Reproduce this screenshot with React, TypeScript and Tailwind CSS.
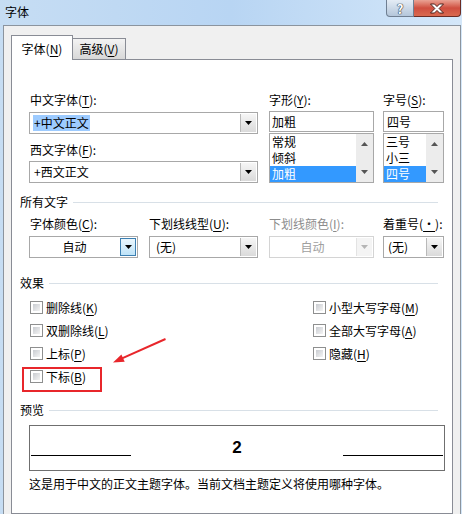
import React from 'react';

// Word 2010 "字体" dialog on a Windows 7 frame

const Key = ({ text, k, colon = true }: { text: string; k: string; colon?: boolean }) => (
  <span>
    {text}(<span className="underline decoration-1 underline-offset-[2px]">{k}</span>){colon ? ':' : ''}
  </span>
);

const Caret = ({ color = '#000' }: { color?: string }) => (
  <svg width="7" height="4" viewBox="0 0 7 4">
    <path d="M0 0h7L3.5 4z" fill={color} />
  </svg>
);

const CaretUp = ({ color = '#555' }: { color?: string }) => (
  <svg width="7" height="4" viewBox="0 0 7 4">
    <path d="M0 4h7L3.5 0z" fill={color} />
  </svg>
);

type ComboProps = {
  value: string;
  className?: string;
  pad?: string;
  selected?: boolean;
  center?: boolean;
  disabled?: boolean;
  hot?: boolean;
};

function Combo({ value, className = '', pad = 'pl-[3px]', selected, center, disabled, hot }: ComboProps) {
  let btn = 'border-l border-[#b9b9b9] bg-linear-to-b from-[#f6f6f6] to-[#dadada]';
  if (hot) btn = 'border border-[#3c7fb1] bg-linear-to-b from-[#eaf6fd] to-[#bee3f8]';
  if (disabled) btn = 'border-l border-[#e3e3e3] bg-[#f4f4f4]';
  return (
    <div
      className={`flex h-[22px] border bg-white ${disabled ? 'border-[#d4d4d4] text-[#a0a0a0]' : 'border-[#a8a8a8]'} ${className}`}
    >
      <div className={`flex-1 flex items-center ${center ? 'justify-center' : pad}`}>
        <span className={`leading-[16px] ${selected ? 'bg-[#9dcbff] px-[1px]' : ''}`}>{value}</span>
      </div>
      <div className={`w-[16px] m-px flex items-center justify-center ${btn}`}>
        <Caret color={disabled ? '#b5b5b5' : '#000'} />
      </div>
    </div>
  );
}

function ListBox({ items, sel, className = '' }: { items: string[]; sel: string; className?: string }) {
  return (
    <div className={`flex h-[50px] border border-[#a8a8a8] bg-white ${className}`}>
      <div className="flex-1 flex flex-col">
        {items.map((it) => (
          <div
            key={it}
            className={`h-[16px] shrink-0 leading-[16px] pl-[2px] ${it === sel ? 'bg-[#3399ff] text-white' : ''}`}
          >
            {it}
          </div>
        ))}
      </div>
      <div className="w-[17px] bg-[#ececec] flex flex-col justify-between items-center py-[8px]">
        <CaretUp />
        <Caret color="#555" />
      </div>
    </div>
  );
}

const Check = () => (
  <span className="w-[13px] h-[13px] shrink-0 border border-[#8e8f8f] bg-white p-[2px]">
    <span className="block w-full h-full bg-linear-to-br from-[#c9ccd1] to-[#f4f4f4]" />
  </span>
);

function CheckRow({ text, k }: { text: string; k: string }) {
  return (
    <div className="flex items-center h-[23px]">
      <Check />
      <span className="ml-[3px] leading-[16px]">
        <Key text={text} k={k} colon={false} />
      </span>
    </div>
  );
}

const Section = ({ title, className = '' }: { title: string; className?: string }) => (
  <div className={`flex items-center h-[16px] pr-[6px] ${className}`}>
    <span className="leading-[16px]">{title}</span>
    <div className="flex-1 h-px bg-[#d8e0e7] ml-[5px]" />
  </div>
);

export default function App() {
  return (
    <div className="relative w-[462px] h-[514px] overflow-hidden flex flex-col bg-linear-to-r from-[#c6ddf3] via-[#b8d5f3] to-[#d4e7f9] font-['Noto_Sans_CJK_SC','Noto_Sans',sans-serif] text-[12px] text-black">
      {/* title bar */}
      <div className="h-[25px] flex items-start shrink-0">
        <span className="pl-[5px] pt-[4px] leading-[16px]">字体</span>
        <div className="ml-auto mr-[1px] flex">
          <div className="w-[28px] h-[17px] border border-[#6f7f92] border-t-0 rounded-bl-[4px] bg-linear-to-b from-[#e4ecf5] to-[#b4c6da] flex items-center justify-center">
            <span className="text-white font-bold text-[13px] leading-[15px] [text-shadow:0_0_1px_#2a3440,0_0_1px_#2a3440,0_0_1px_#2a3440]">
              ?
            </span>
          </div>
          <div className="w-[47px] h-[17px] border border-l-0 border-t-0 border-[#6b2b23] rounded-br-[4px] bg-linear-to-b from-[#e9a294] via-[#cf4e3f] to-[#d9694f] flex items-center justify-center">
            <svg width="16" height="11" viewBox="0 0 16 11">
              <path
                d="M1.5 1h4l2.5 2.6L10.5 1h4l-4.4 4.5L14.5 10h-4L8 7.4 5.5 10h-4l4.4-4.5z"
                fill="#fff"
                stroke="#3d1510"
                strokeWidth="0.9"
                strokeLinejoin="round"
              />
            </svg>
          </div>
        </div>
      </div>

      {/* client area */}
      <div className="flex-1 flex flex-col ml-[3px] mr-[1px] border-l border-t border-r border-[#8b949e] bg-[#f0f0f0] pl-[7px] pt-[9px]">
        {/* tabs */}
        <div className="flex items-end h-[24px] shrink-0">
          <div className="relative z-10 -mb-px w-[62px] h-[25px] border border-b-0 border-[#898c95] bg-white flex justify-center pt-[5px]">
            <span className="leading-[16px]">
              <Key text="字体" k="N" colon={false} />
            </span>
          </div>
          <div className="w-[53px] h-[21px] border border-l-0 border-b-0 border-[#898c95] bg-linear-to-b from-[#f3f3f3] to-[#d8d8d8] flex justify-center pt-[2px]">
            <span className="leading-[16px]">
              <Key text="高级" k="V" colon={false} />
            </span>
          </div>
        </div>

        {/* tab page */}
        <div className="flex-1 w-[442px] border border-[#898c95] bg-white px-[8px] pt-[32px]">
          <div className="flex ml-[9px]">
            <div className="w-[229px] flex flex-col">
              <div className="leading-[16px] pl-[1px]">
                <Key text="中文字体" k="T" />
              </div>
              <Combo value="+中文正文" selected className="mt-[4px]" pad="pl-[3px]" />
              <div className="leading-[16px] pl-[1px] mt-[8px]">
                <Key text="西文字体" k="F" />
              </div>
              <Combo value="+西文正文" className="mt-[3px]" pad="pl-[4px]" />
            </div>
            <div className="w-[105px] ml-[11px] flex flex-col">
              <div className="leading-[16px]">
                <Key text="字形" k="Y" />
              </div>
              <div className="mt-[3px] h-[21px] border border-[#a8a8a8] bg-white flex items-center pl-[2px] leading-[16px]">
                加粗
              </div>
              <ListBox items={['常规', '倾斜', '加粗']} sel="加粗" className="mt-[1px]" />
            </div>
            <div className="w-[61px] ml-[9px] flex flex-col">
              <div className="leading-[16px]">
                <Key text="字号" k="S" />
              </div>
              <div className="mt-[3px] h-[21px] border border-[#a8a8a8] bg-white flex items-center pl-[3px] leading-[16px]">
                四号
              </div>
              <ListBox items={['三号', '小三', '四号']} sel="四号" className="mt-[1px]" />
            </div>
          </div>

          <Section title="所有文字" className="mt-[11px]" />

          <div className="flex ml-[9px] mt-[6px]">
            <div className="w-[109px] flex flex-col">
              <div className="leading-[16px] pl-[1px]">
                <Key text="字体颜色" k="C" />
              </div>
              <Combo value="自动" center hot className="mt-[4px]" />
            </div>
            <div className="w-[109px] ml-[11px] flex flex-col">
              <div className="leading-[16px]">
                <Key text="下划线线型" k="U" />
              </div>
              <Combo value="(无)" className="mt-[4px]" pad="pl-[6px]" />
            </div>
            <div className="w-[105px] ml-[11px] flex flex-col">
              <div className="leading-[16px] text-[#8c8c8c]">
                <Key text="下划线颜色" k="I" />
              </div>
              <Combo value="自动" center disabled className="mt-[4px]" />
            </div>
            <div className="w-[61px] ml-[9px] flex flex-col">
              <div className="leading-[16px]">
                <Key text="着重号" k="·" />
              </div>
              <Combo value="(无)" className="mt-[4px]" pad="pl-[4px]" />
            </div>
          </div>

          <Section title="效果" className="mt-[17px]" />

          <div className="grid grid-cols-[283px_1fr] ml-[10px] mt-[5px]">
            <div className="flex flex-col">
              <CheckRow text="删除线" k="K" />
              <CheckRow text="双删除线" k="L" />
              <CheckRow text="上标" k="P" />
              <CheckRow text="下标" k="B" />
            </div>
            <div className="flex flex-col">
              <CheckRow text="小型大写字母" k="M" />
              <CheckRow text="全部大写字母" k="A" />
              <CheckRow text="隐藏" k="H" />
            </div>
          </div>

          <Section title="预览" className="mt-[14px]" />

          <div className="ml-[9px] mt-[7px] w-[416px] h-[46px] border border-[#6f6f6f] flex px-[1px]">
            <div className="w-[100px] h-px bg-black mt-[29px]" />
            <div className="flex-1 text-center mt-[12px] font-['Liberation_Sans',sans-serif] font-bold text-[17px] leading-[20px]">
              2
            </div>
            <div className="w-[100px] h-px bg-black mt-[29px]" />
          </div>

          <div className="ml-[9px] mt-[5px] leading-[16px]">
            这是用于中文的正文主题字体。当前文档主题定义将使用哪种字体。
          </div>
        </div>
      </div>

      {/* annotation: red box and arrow */}
      <div className="absolute left-[22px] top-[367px] w-[80px] h-[25px] border-2 border-[#e8262b]" />
      <svg className="absolute left-0 top-0 pointer-events-none" width="462" height="514" viewBox="0 0 462 514">
        <line x1="165.5" y1="339" x2="122" y2="358.3" stroke="#e8262b" strokeWidth="2" />
        <polygon points="113,362.5 124.7,361.7 121.4,354.4" fill="#e8262b" />
      </svg>
    </div>
  );
}
